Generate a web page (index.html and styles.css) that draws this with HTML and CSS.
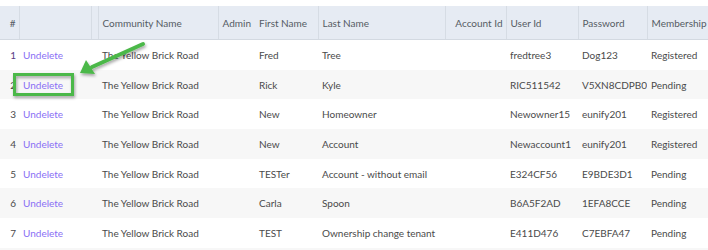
FILE: index.html
```html
<!DOCTYPE html>
<html>
<head>
<meta charset="utf-8">
<link rel="stylesheet" href="styles.css">
</head>
<body>
<div class="wrap">
<table class="grid">
<colgroup>
<col class="c-num"><col class="c-act"><col class="c-gap"><col class="c-comm"><col class="c-admin"><col class="c-first"><col class="c-last"><col class="c-acc"><col class="c-user"><col class="c-pass"><col class="c-mem">
</colgroup>
<thead>
<tr>
<th class="num">#</th><th class="bl"></th><th class="bl"></th><th class="bl">Community Name</th><th class="bl">Admin</th><th>First Name</th><th class="bl">Last Name</th><th class="bl right">Account Id</th><th class="bl">User Id</th><th class="bl">Password</th><th class="bl">Membership</th>
</tr>
</thead>
<tbody>
<tr><td class="num visited">1</td><td><a class="act">Undelete</a></td><td></td><td>The Yellow Brick Road</td><td></td><td>Fred</td><td>Tree</td><td></td><td>fredtree3</td><td>Dog123</td><td>Registered</td></tr>
<tr><td class="num">2</td><td><a class="act">Undelete</a></td><td></td><td>The Yellow Brick Road</td><td></td><td>Rick</td><td>Kyle</td><td></td><td>RIC511542</td><td>V5XN8CDPB0</td><td>Pending</td></tr>
<tr><td class="num">3</td><td><a class="act">Undelete</a></td><td></td><td>The Yellow Brick Road</td><td></td><td>New</td><td>Homeowner</td><td></td><td>Newowner15</td><td>eunify201</td><td>Registered</td></tr>
<tr><td class="num">4</td><td><a class="act">Undelete</a></td><td></td><td>The Yellow Brick Road</td><td></td><td>New</td><td>Account</td><td></td><td>Newaccount1</td><td>eunify201</td><td>Registered</td></tr>
<tr><td class="num">5</td><td><a class="act">Undelete</a></td><td></td><td>The Yellow Brick Road</td><td></td><td>TESTer</td><td>Account - without email</td><td></td><td>E324CF56</td><td>E9BDE3D1</td><td>Pending</td></tr>
<tr><td class="num">6</td><td><a class="act">Undelete</a></td><td></td><td>The Yellow Brick Road</td><td></td><td>Carla</td><td>Spoon</td><td></td><td>B6A5F2AD</td><td>1EFA8CCE</td><td>Pending</td></tr>
<tr><td class="num">7</td><td><a class="act">Undelete</a></td><td></td><td>The Yellow Brick Road</td><td></td><td>TEST</td><td>Ownership change tenant</td><td></td><td>E411D476</td><td>C7EBFA47</td><td>Pending</td></tr>
<tr><td class="num"></td><td></td><td></td><td></td><td></td><td></td><td></td><td></td><td></td><td></td><td></td></tr>
</tbody>
</table>
<svg class="callout" width="160" height="110" viewBox="0 0 160 110">
<defs>
<filter id="sh" x="-20%" y="-20%" width="140%" height="140%">
<feDropShadow dx="1" dy="2" stdDeviation="1.5" flood-color="#000" flood-opacity="0.35"/>
</filter>
</defs>
<g filter="url(#sh)">
<rect x="14.5" y="74.5" width="58" height="20" fill="none" stroke="#4cb849" stroke-width="3"/>
<line x1="143" y1="44" x2="92" y2="67" stroke="#4cb849" stroke-width="4" stroke-linecap="round"/>
<polygon points="80,73 86,60 95,74" fill="#4cb849"/>
</g>
</svg>
</div>
</body>
</html>
```
FILE: styles.css
```css
html, body {
  margin: 0;
  padding: 0;
  background: #ffffff;
}
.wrap {
  position: relative;
  padding-top: 6px;
  width: 708px;
  height: 244px;
  overflow: hidden;
}
.grid {
  border-collapse: collapse;
  table-layout: fixed;
  width: 708px;
  font-family: Lato, "Noto Sans", sans-serif;
  font-size: 10px;
  color: #4a4a4a;
}
.c-num { width: 19px; }
.c-act { width: 72px; }
.c-gap { width: 7px; }
.c-comm { width: 120px; }
.c-admin { width: 37px; }
.c-first { width: 63px; }
.c-last { width: 127px; }
.c-acc { width: 61px; }
.c-user { width: 72px; }
.c-pass { width: 69px; }
.c-mem { width: 61px; }
.grid th {
  background: #e6ebf3;
  color: #555b63;
  font-weight: normal;
  text-align: left;
  height: 33px;
  padding: 0 4px;
  border-bottom: 1px solid #d3d9e1;
  white-space: nowrap;
  overflow: hidden;
}
.grid th.bl {
  border-left: 1px solid #d6dce4;
}
.grid th.right {
  text-align: right;
  padding-right: 3px;
}
.grid th.num {
  text-align: right;
  padding-right: 3px;
}
.grid td {
  height: 29.7px;
  padding: 0 4px;
  white-space: nowrap;
  overflow: hidden;
}
.grid td.num {
  text-align: right;
  padding-right: 3px;
}
.grid td.visited {
  color: #5b3a86;
}
.grid tbody tr:nth-child(even) td {
  background: #f7f7f7;
}
.act {
  color: #8a6ff5;
}
.callout {
  position: absolute;
  left: 0;
  top: 0;
}
```
